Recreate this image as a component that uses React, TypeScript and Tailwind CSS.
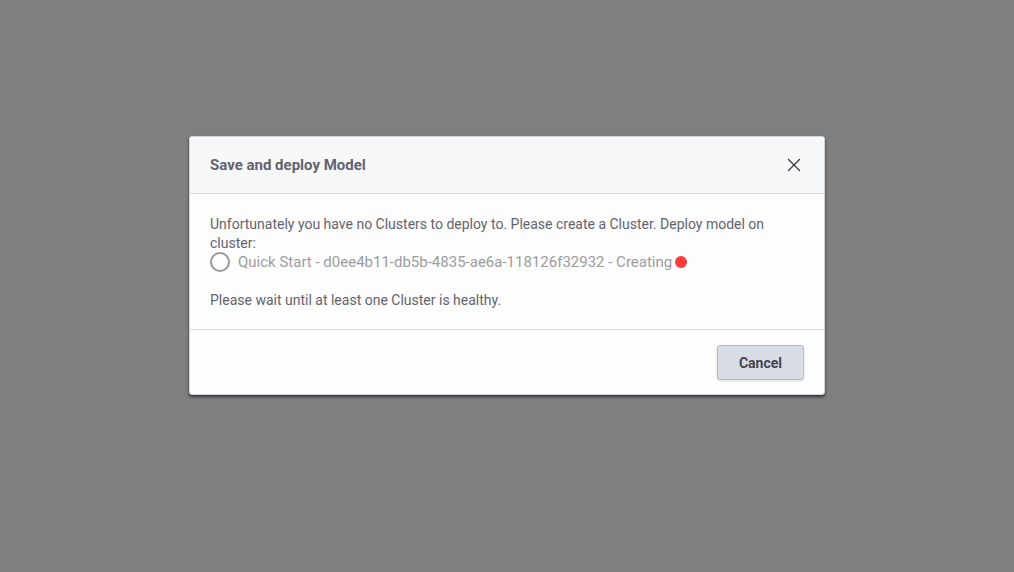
import { X } from "lucide-react";

export default function App() {
  return (
    <main className="flex min-h-screen items-start justify-center bg-[#7f7f7f] px-4 pt-[136px] font-['Roboto','Liberation_Sans',sans-serif] text-sm text-[#636370]">
      <section
        role="dialog"
        aria-modal="true"
        aria-labelledby="dialog-title"
        className="w-full max-w-[636px] overflow-hidden rounded-[3px] border border-[#d3d5de] bg-[#fdfdfd] shadow-[0_2px_3px_rgba(0,0,0,0.6)]"
      >
        <header className="flex h-[57px] items-center justify-between border-b border-[#d6d9e0] bg-[#f7f8fa] px-5">
          <h1 id="dialog-title" className="text-[15px] leading-5 font-bold">Save and deploy Model</h1>
          <button type="button" aria-label="Close" className="flex size-5 items-center justify-center text-[#33343d]">
            <X size={22} strokeWidth={1.3} className="shrink-0" />
          </button>
        </header>
        <div className="px-5 pt-[21px] pb-[19px] leading-[19px]">
          <p>Unfortunately you have no Clusters to deploy to. Please create a Cluster. Deploy model on cluster:</p>
          <label className="flex h-[18px] items-center gap-2 text-[15px] text-[#9c9c9f]">
            <input type="radio" name="cluster" disabled className="size-5 shrink-0 appearance-none rounded-full border-2 border-[#999]" />
            <span className="flex items-center gap-[3px]">
              Quick Start - d0ee4b11-db5b-4835-ae6a-118126f32932 - Creating
              <span className="size-3 rounded-full bg-[#ff3b3b]" />
            </span>
          </label>
          <p className="mt-5">Please wait until at least one Cluster is healthy.</p>
        </div>
        <footer className="flex justify-end border-t border-[#d6d9e0] px-5 pt-[15px] pb-[14px]">
          <button type="button" className="h-[35px] rounded-[3px] border border-[#b3b9c7] bg-[#d8dce5] px-[21px] font-bold text-[#43444e] shadow-sm">Cancel</button>
        </footer>
      </section>
    </main>
  );
}
